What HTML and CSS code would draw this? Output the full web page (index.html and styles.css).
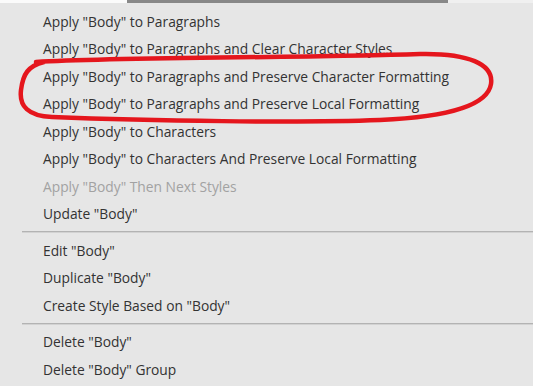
FILE: index.html
```html
<!DOCTYPE html>
<html lang="en">
<head>
  <meta charset="utf-8">
  <title>Paragraph Style Menu</title>
  <link rel="stylesheet" href="styles.css">
</head>
<body>
  <div class="top-strip">
    <div class="strip-left"></div>
    <div class="strip-thumb"></div>
    <div class="strip-right"></div>
  </div>

  <div class="menu">
    <div class="menu-item">Apply "Body" to Paragraphs</div>
    <div class="menu-item">Apply "Body" to Paragraphs and Clear Character Styles</div>
    <div class="menu-item">Apply "Body" to Paragraphs and Preserve Character Formatting</div>
    <div class="menu-item">Apply "Body" to Paragraphs and Preserve Local Formatting</div>
    <div class="menu-item">Apply "Body" to Characters</div>
    <div class="menu-item">Apply "Body" to Characters And Preserve Local Formatting</div>
    <div class="menu-item disabled">Apply "Body" Then Next Styles</div>
    <div class="menu-item">Update "Body"</div>
    <div class="separator"></div>
    <div class="menu-item">Edit "Body"</div>
    <div class="menu-item">Duplicate "Body"</div>
    <div class="menu-item">Create Style Based on "Body"</div>
    <div class="separator"></div>
    <div class="menu-item">Delete "Body"</div>
    <div class="menu-item">Delete "Body" Group</div>
  </div>

  <!-- hand drawn highlight round the two preserve items -->
  <svg class="scribble" width="533" height="386" viewBox="0 0 533 386">
    <path d="M 36 62 C 120 57, 300 58, 420 54 C 468 53, 494 64, 491 84 C 488 104, 452 117, 380 120 C 300 123, 150 121, 52 117 C 28 116, 19 106, 21 90 C 23 74, 28 66, 44 62"
          fill="none" stroke="#e5161d" stroke-width="4.5" stroke-linecap="round"/>
  </svg>
</body>
</html>
```

FILE: styles.css
```css
body {
  margin: 0;
  width: 533px;
  height: 386px;
  overflow: hidden;
  background-color: #e6e6e6;
  font-family: "Open Sans", "Noto Sans", sans-serif;
  position: relative;
}

.top-strip {
  display: flex;
  height: 3px;
}

.strip-left {
  width: 127px;
  background-color: #fbfbfb;
}

.strip-thumb {
  width: 321px;
  background-color: #888888;
}

.strip-right {
  flex: 1;
  background-color: #f0f0f0;
}

.menu {
  display: flex;
  flex-direction: column;
  padding-top: 4.5px;
}

.menu-item {
  height: 27.5px;
  line-height: 27.5px;
  padding-left: 43px;
  font-size: 13.8px;
  color: #333333;
  white-space: nowrap;
}

.menu-item.disabled {
  color: #a2a2a2;
}

.separator {
  height: 1px;
  margin: 3.5px 0 3.5px 22px;
  background-color: #b3b3b3;
  border-bottom: 1px solid #d2d2d2;
}

.scribble {
  position: absolute;
  left: 0;
  top: 0;
}
```
